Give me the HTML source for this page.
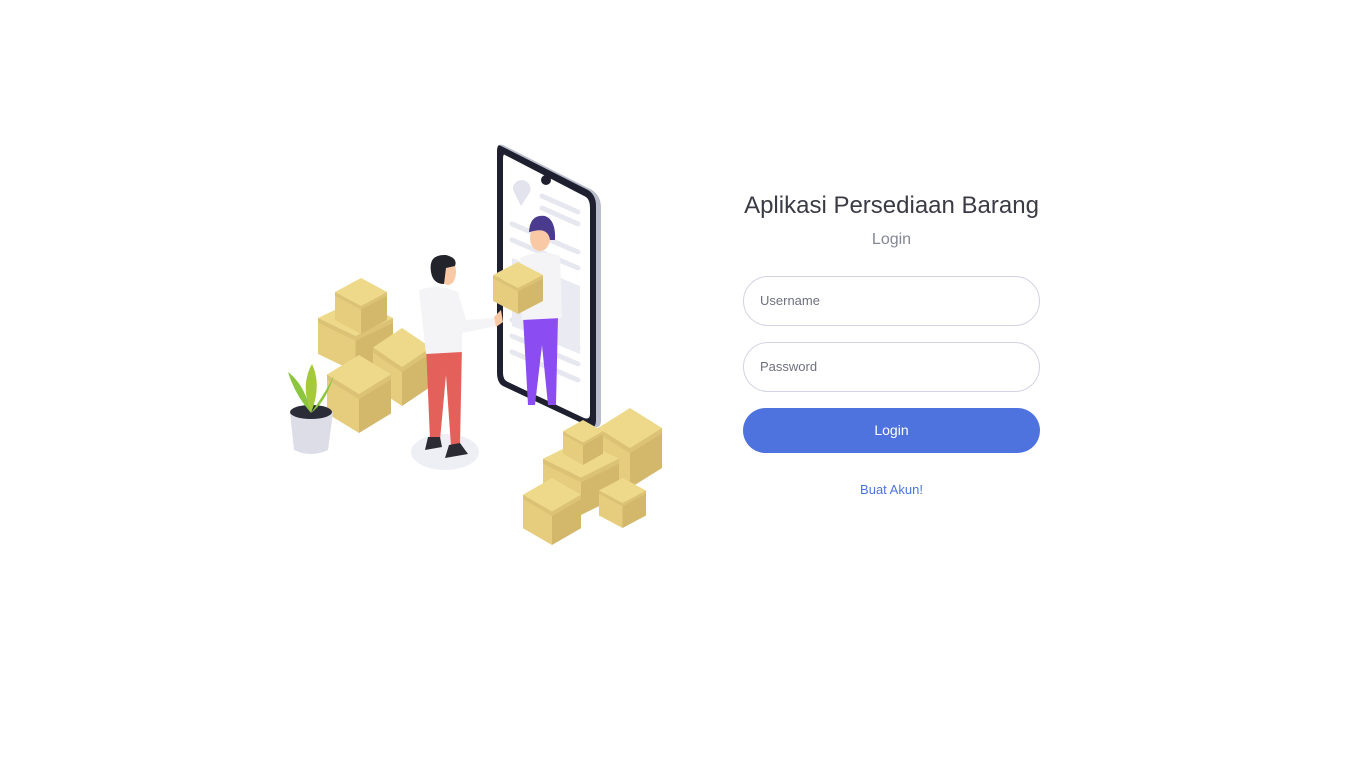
<!DOCTYPE html>
<html><head><meta charset="utf-8"><style>
html,body{margin:0;padding:0;background:#fff;width:1366px;height:768px;overflow:hidden;font-family:"Liberation Sans",sans-serif}
svg.ill{position:absolute;left:0;top:0}
.t{position:absolute;left:733px;width:317px;text-align:center}
.in{position:absolute;left:743px;width:295px;height:48px;border:1px solid #d1d3e2;border-radius:25px;font-size:13px;color:#6e707e;line-height:48px;text-indent:16px}
.btn{position:absolute;left:743px;top:408px;width:297px;height:45px;border-radius:23px;background:#4e73df;color:#fff;font-size:14px;text-align:center;line-height:45px}
</style></head><body>
<svg class="ill" width="1366" height="768" viewBox="0 0 1366 768">
<defs>
<symbol id="bx" viewBox="0 0 60 60" preserveAspectRatio="none">
<polygon points="0,15 30,30 30,60 0,45" fill="#e6cd7e"/>
<polygon points="30,30 60,15 60,45 30,60" fill="#d3b86b"/>
<polygon points="0,15 30,0 60,15 30,30" fill="#eed98a"/>
<polygon points="0,15 30,30 60,15 60,19 30,34 0,19" fill="#dcc275"/>
</symbol>
</defs>
<ellipse cx="445" cy="452" rx="34" ry="18" fill="#eeeff4"/>
<use href="#bx" x="318" y="300" width="75" height="72"/>
<use href="#bx" x="335" y="278" width="52" height="56"/>
<use href="#bx" x="373" y="328" width="58" height="78"/>
<use href="#bx" x="327" y="355" width="64" height="78"/>
<path d="M290,412 L333,412 L328,450 Q311,458 294,450 Z" fill="#dcdde7"/>
<ellipse cx="311" cy="412" rx="21" ry="7" fill="#2a2c38"/>
<path d="M311,413 Q295,395 288,372 Q305,385 311,413Z" fill="#8cc63f"/>
<path d="M311,413 Q300,385 312,364 Q322,385 311,413Z" fill="#a4c93a"/>
<path d="M311,413 Q326,392 334,375 Q326,402 311,413Z" fill="#8cc63f"/>
<path d="M503,145 L592,190 Q601,196 601,208 L601,420 Q601,430 592,426 L503,386 Q497,383 497,372 L497,152 Q497,143 503,145Z" fill="#b9bdcc"/>
<path d="M501,146 L588,190 Q596,195 596,206 L596,420 Q596,430 588,426 L503,386 Q497,383 497,372 L497,152 Q497,143 501,146Z" fill="#1e2030"/>
<path d="M505,155 L586,197 Q590,200 590,208 L590,414 Q590,420 584,418 L508,382 Q503,380 503,373 L503,160 Q503,153 505,155Z" fill="#fff"/>
<circle cx="546" cy="180" r="5" fill="#1e2030"/>
<path d="M521,180 a9,9 0 0 1 9,12 l-9,14 l-8,-16 a9,9 0 0 1 8,-10Z" fill="#e2e3ec"/>
<g stroke="#e6e7ef" stroke-width="5" stroke-linecap="round">
<line x1="542" y1="196" x2="578" y2="212"/><line x1="542" y1="208" x2="578" y2="224"/><line x1="512" y1="224" x2="578" y2="252"/><line x1="512" y1="240" x2="578" y2="268"/>
<line x1="512" y1="320" x2="578" y2="348"/><line x1="512" y1="336" x2="578" y2="364"/><line x1="512" y1="352" x2="578" y2="380"/>
</g>
<polygon points="512,258 580,286 580,354 512,326" fill="#eaebf2"/>
<path d="M523,316 L558,316 L556,405 L548,405 L542,345 L535,405 L528,405Z" fill="#8b4cf2"/>
<path d="M520,258 Q540,248 560,256 L562,318 L522,320Z" fill="#f4f4f6"/>
<ellipse cx="540" cy="238" rx="10" ry="13" fill="#f9c9a6"/>
<path d="M529,232 Q530,214 545,216 Q556,220 555,240 L550,240 Q548,226 530,232Z" fill="#4b3b8f"/>
<use href="#bx" x="493" y="262" width="50" height="52"/>
<path d="M426,345 L462,345 L460,445 L451,446 L446,375 L440,440 L430,440Z" fill="#e4605a"/>
<path d="M428,437 L440,437 L442,447 L425,450Z M449,445 L460,443 L468,454 L445,458Z" fill="#2b2b33"/>
<path d="M419,290 Q440,283 458,292 L466,320 L494,318 L496,326 L462,333 L462,352 L426,354Z" fill="#f4f4f6"/>
<path d="M494,317 L501,310 L503,322 L496,327Z" fill="#f9c9a6"/>
<ellipse cx="448" cy="272" rx="8" ry="13" fill="#f9c9a6"/>
<path d="M431,272 Q428,254 446,255 Q458,258 455,266 L446,268 L444,284 Q433,284 431,272Z" fill="#23232b"/>
<use href="#bx" x="598" y="408" width="64" height="80"/>
<use href="#bx" x="543" y="440" width="76" height="75"/>
<use href="#bx" x="563" y="420" width="40" height="45"/>
<use href="#bx" x="523" y="478" width="58" height="67"/>
<use href="#bx" x="599" y="478" width="47" height="50"/>
</svg>
<div class="t" style="top:192px;font-size:24px;color:#3a3b45">Aplikasi Persediaan Barang</div>
<div class="t" style="top:231px;font-size:16px;color:#858796">Login</div>
<div class="in" style="top:276px">Username</div>
<div class="in" style="top:342px">Password</div>
<div class="btn">Login</div>
<div class="t" style="top:482px;font-size:13px;color:#4e73df">Buat Akun!</div>
</body></html>
